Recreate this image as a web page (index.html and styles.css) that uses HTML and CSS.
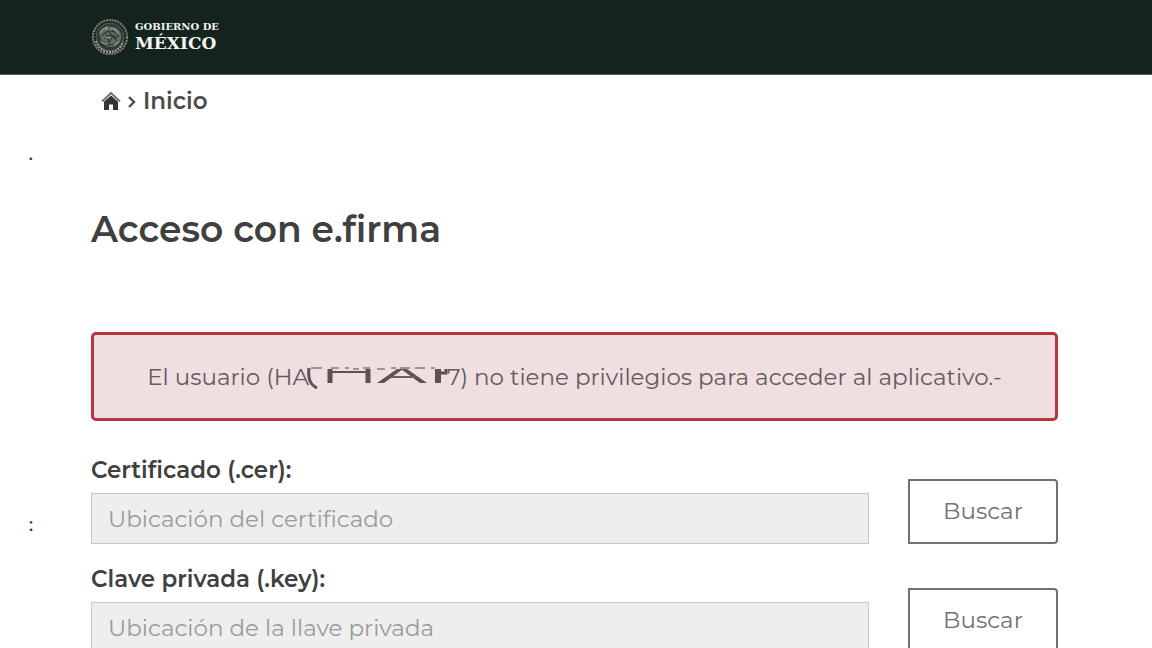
FILE: index.html
```html
<!DOCTYPE html>
<html lang="es">
  <head>
    <meta charset="utf-8">
    <meta name="viewport" content="width=device-width, initial-scale=1">
    <title>Acceso con e.firma</title>
    <link rel="stylesheet" href="styles.css">
  </head>
  <body>
    <header class="topbar">
      <a class="brand" href="#">
        <svg class="seal" viewBox="0 0 38 38" aria-hidden="true">
          <circle cx="19" cy="19" r="17" fill="none" stroke="#77796b" stroke-width="2.200" stroke-dasharray="2.200 .7" />
          <circle cx="19" cy="19" r="14" fill="#2f3b36" stroke="#55605a" stroke-width="1" />
          <path d="M5 23c2 7 8 11 14 11s11-4 13-10" fill="none" stroke="#a3a392" stroke-width="2" stroke-dasharray="2 1" />
          <path d="M8 17c2-6 8-10 14-8 6 1 9 6 8 12-1 4-5 7-9 8-5 0-9-2-12-6 2-1 1-4-1-6z" fill="#626c63" />
          <path d="M11 18c3-5 8-6 12-4M13 21c3-4 8-5 13-1M17 13l9 10M21 11l7 8M11 23l7 4 9-2M15 16l3 8M22 17l-4 8" fill="none" stroke="#2d3a35" stroke-width="1.200" />
          <path d="M9 15c1-3 4-5 7-6l-1 3M10 24l6 2M23 27l5-3M19 11c4-1 7 2 8 5M14 19l6 1" fill="none" stroke="#9fa092" stroke-width="1.200" />
        </svg>
        <span class="brand-text">
          <span class="brand-small">GOBIERNO DE</span>
          <span class="brand-big">MÉXICO</span>
        </span>
      </a>
    </header>

    <nav class="breadcrumb">
      <a href="#" aria-label="Portada">
        <svg class="home" viewBox="0 0 20 20" aria-hidden="true">
          <path d="M1 10.500L10 2l9 8.500" fill="none" stroke="#6e6e6e" stroke-width="1.800" />
          <path d="M3 10.800L10 4.500l7 6.300V19h-5v-5.500H8V19H3z" fill="#333" />
        </svg>
      </a>
      <svg class="chevron" viewBox="0 0 8 14" aria-hidden="true">
        <path d="M1 3l5 5-5 5" fill="none" stroke="#4d4d4d" stroke-width="2.400" />
      </svg>
      <a href="#">Inicio</a>
    </nav>

    <main>
      <section class="row row-title">
        <span class="mark">.</span>
        <h1>Acceso con e.firma</h1>
      </section>

      <section class="row">
        <div class="alert" role="alert">
          <span>El usuario (HA</span>
          <svg class="smear" viewBox="0 0 144 24" aria-hidden="true">
            <path d="M2 3c-1 9 0 16 8 20" fill="none" stroke="#5d5152" stroke-width="3" />
            <path d="M4 3h11M24 3h8M38 3h4M46 4h6M56 3h7M70 4h8M84 3h5M93 3h10M108 3h10M124 3h4" stroke="#84797a" stroke-width="1.500" />
            <path d="M23 4v14M61 4v14" stroke="#5d5152" stroke-width="5" />
            <path d="M23 7h38" stroke="#5d5152" stroke-width="2" />
            <path d="M70 18h7L96 4h-6zM100 4h-6l19 14h7z" fill="#5d5152" />
            <path d="M84 12h24" stroke="#6b5f60" stroke-width="2" />
            <path d="M131 4v14" stroke="#5d5152" stroke-width="6" />
            <path d="M133 8h6V4" fill="none" stroke="#5d5152" stroke-width="3" />
          </svg>
          <span>7) no tiene privilegios para acceder al aplicativo.-</span>
        </div>
      </section>

      <form>
        <div class="row">
          <span class="mark">:</span>
          <div class="field">
            <label for="cer">Certificado (.cer):</label>
            <input id="cer" type="text" placeholder="Ubicación del certificado" readonly>
          </div>
          <button type="button">Buscar</button>
        </div>
        <div class="row">
          <div class="field">
            <label for="key">Clave privada (.key):</label>
            <input id="key" type="text" placeholder="Ubicación de la llave privada" readonly>
          </div>
          <button type="button">Buscar</button>
        </div>
      </form>
    </main>
  </body>
</html>
```

FILE: styles.css
```css
* {
  box-sizing: border-box;
}

body {
  margin: 0;
  background: #fff;
  color: #404041;
  font-family: Montserrat, Inter, sans-serif;
  font-size: 23px;
  line-height: 32px;
}

a {
  color: inherit;
  text-decoration: none;
}

.topbar {
  display: flex;
  align-items: center;
  height: 75px;
  padding: 0 91px;
  background: #15231f;
  border-bottom: 1px solid #56605c;
}

.brand {
  display: flex;
  align-items: center;
  gap: 6px;
  color: #f2f4f2;
  font-family: "DejaVu Serif", serif;
  font-weight: bold;
}

.seal {
  width: 38px;
  height: 38px;
}

.brand-text {
  display: flex;
  flex-direction: column;
}

.brand-small {
  font-size: 10px;
  line-height: 12px;
}

.brand-big {
  font-size: 17px;
  line-height: 20px;
}

.breadcrumb {
  display: flex;
  align-items: center;
  gap: 7px;
  padding: 10px 101px 0;
  color: #4d4d4d;
  font-weight: 600;
}

.breadcrumb a {
  display: flex;
}

.home {
  width: 20px;
  height: 20px;
}

.chevron {
  width: 8px;
  height: 14px;
}

/* left gutter, content, button column */
.row {
  display: grid;
  grid-template-columns: 91px 1fr 150px;
  padding-right: 94px;
}

.mark {
  padding-left: 28px;
  color: #333;
  font-family: "Liberation Serif", serif;
  font-size: 22px;
}

.row-title {
  padding-top: 20px;
}

h1 {
  grid-column: 2 / 4;
  margin: 68px 0 79px;
  font-size: 36px;
  font-weight: 600;
  line-height: 48px;
}

.alert {
  grid-column: 2 / 4;
  display: flex;
  align-items: center;
  justify-content: center;
  min-height: 89px;
  background: #efdfe0;
  border: 3px solid #b5383f;
  border-radius: 5px;
  color: #645a5b;
}

/* runs over the letters on both sides */
.smear {
  flex: none;
  width: 144px;
  height: 24px;
  margin: 0 -4px 0 -2px;
}

form {
  display: grid;
  gap: 19px;
  padding: 33px 0;
}

.field {
  grid-column: 2;
  display: flex;
  flex-direction: column;
  gap: 7px;
  margin-right: 39px;
}

label {
  font-weight: 600;
}

form .mark {
  grid-row: 1;
  align-self: end;
  padding-bottom: 4px;
}

input {
  width: 100%;
  height: 51px;
  padding: 0 16px;
  background: #eee;
  border: 1px solid #c8c8c8;
  border-radius: 0;
  color: #555;
  font: inherit;
}

input::placeholder {
  color: #9b9b9b;
}

button {
  grid-column: 3;
  align-self: end;
  height: 65px;
  padding: 0 0 2px;
  background: #fff;
  border: 2px solid #6f7172;
  border-radius: 0 4px 4px 0;
  color: #6f7172;
  font: inherit;
}
```
